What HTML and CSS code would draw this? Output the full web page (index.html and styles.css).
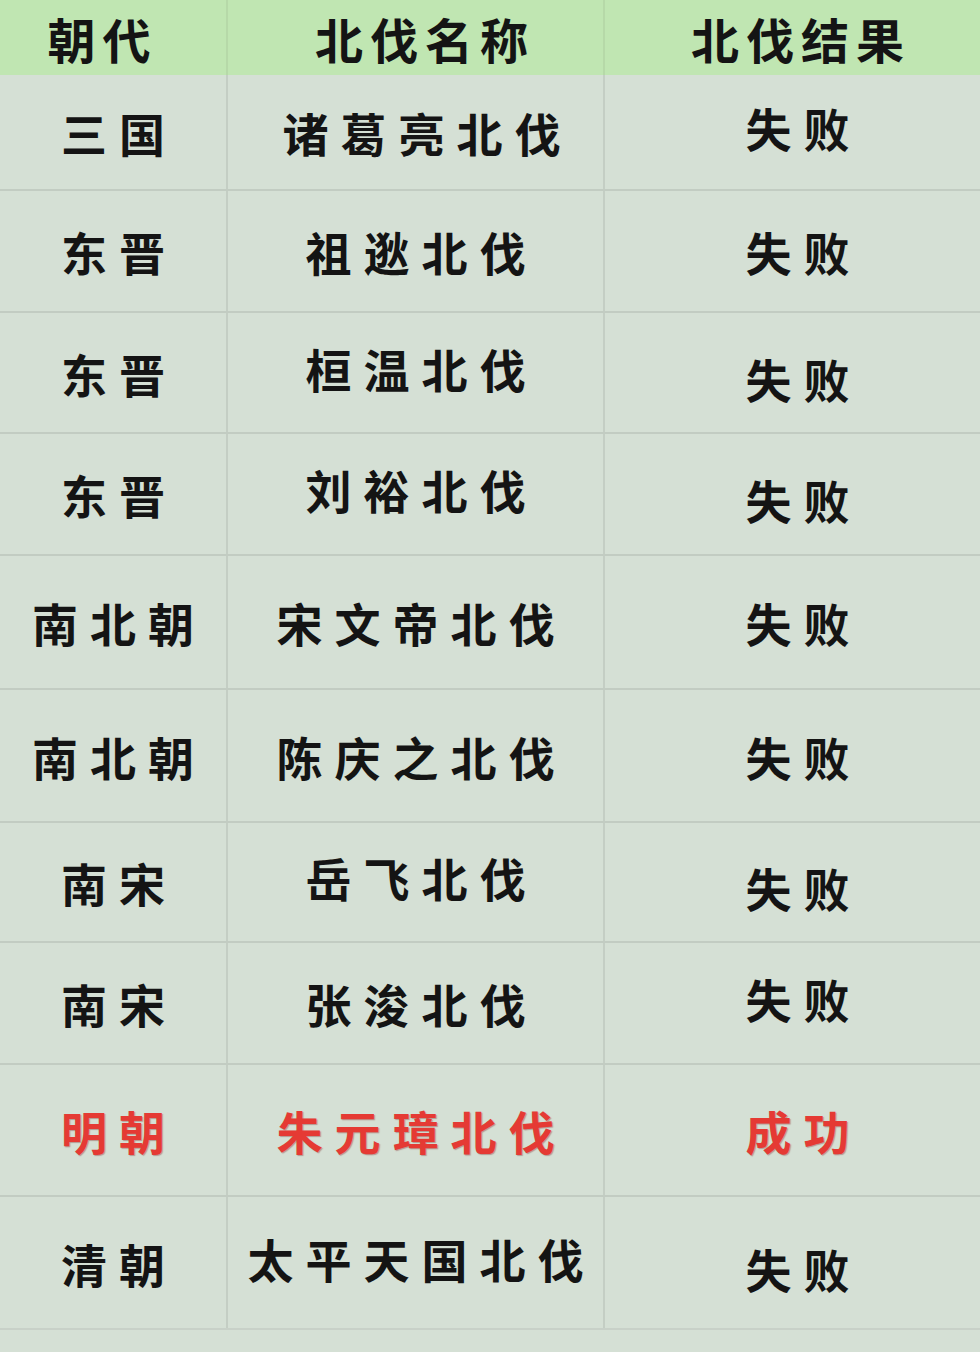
FILE: index.html
```html
<!DOCTYPE html>
<html lang="zh-CN">
<head>
<meta charset="utf-8">
<title>北伐</title>
<link rel="stylesheet" href="styles.css">
</head>
<body>
<div class="table">
  <div class="row head">
    <div class="cell c1"><span class="t">朝代</span></div>
    <div class="cell c2"><span class="t">北伐名称</span></div>
    <div class="cell c3"><span class="t">北伐结果</span></div>
  </div>
  <div class="row h116">
    <div class="cell c1"><span class="t">三国</span></div>
    <div class="cell c2"><span class="t right">诸葛亮北伐</span></div>
    <div class="cell c3"><span class="t up">失败</span></div>
  </div>
  <div class="row h122">
    <div class="cell c1"><span class="t">东晋</span></div>
    <div class="cell c2"><span class="t">祖逖北伐</span></div>
    <div class="cell c3"><span class="t">失败</span></div>
  </div>
  <div class="row h121">
    <div class="cell c1"><span class="t">东晋</span></div>
    <div class="cell c2"><span class="t up">桓温北伐</span></div>
    <div class="cell c3"><span class="t down">失败</span></div>
  </div>
  <div class="row h122">
    <div class="cell c1"><span class="t">东晋</span></div>
    <div class="cell c2"><span class="t up">刘裕北伐</span></div>
    <div class="cell c3"><span class="t down">失败</span></div>
  </div>
  <div class="row h134">
    <div class="cell c1"><span class="t">南北朝</span></div>
    <div class="cell c2"><span class="t">宋文帝北伐</span></div>
    <div class="cell c3"><span class="t">失败</span></div>
  </div>
  <div class="row h133">
    <div class="cell c1"><span class="t">南北朝</span></div>
    <div class="cell c2"><span class="t">陈庆之北伐</span></div>
    <div class="cell c3"><span class="t">失败</span></div>
  </div>
  <div class="row h120">
    <div class="cell c1"><span class="t">南宋</span></div>
    <div class="cell c2"><span class="t up">岳飞北伐</span></div>
    <div class="cell c3"><span class="t down">失败</span></div>
  </div>
  <div class="row h122">
    <div class="cell c1"><span class="t">南宋</span></div>
    <div class="cell c2"><span class="t">张浚北伐</span></div>
    <div class="cell c3"><span class="t up">失败</span></div>
  </div>
  <div class="row h132 ming">
    <div class="cell c1"><span class="t">明朝</span></div>
    <div class="cell c2"><span class="t">朱元璋北伐</span></div>
    <div class="cell c3"><span class="t">成功</span></div>
  </div>
  <div class="row h133 last">
    <div class="cell c1"><span class="t">清朝</span></div>
    <div class="cell c2"><span class="t up">太平天国北伐</span></div>
    <div class="cell c3"><span class="t down">失败</span></div>
  </div>
</div>
</body>
</html>
```
FILE: styles.css
```css
html, body {
  margin: 0;
  padding: 0;
  background: #d5e0d5;
}
body {
  width: 980px;
  height: 1352px;
  overflow: hidden;
  font-family: "Noto Sans CJK SC", "Noto Sans", sans-serif;
  color: #141414;
}
.table {
  display: flex;
  flex-direction: column;
  width: 980px;
}
.row {
  display: grid;
  grid-template-columns: 228px 377px 375px;
  border-bottom: 2px solid #c2ccc2;
  box-sizing: border-box;
}
.row.head {
  height: 75px;
  background: #c0e6b2;
  border-bottom: none;
}
.h116 { height: 116px; }
.h120 { height: 120px; }
.h121 { height: 121px; }
.h122 { height: 122px; }
.h132 { height: 132px; }
.h133 { height: 133px; }
.h134 { height: 134px; }
.row.last {
  border-bottom-color: #c8d1c8;
}
.cell {
  display: flex;
  align-items: center;
  justify-content: center;
  box-sizing: border-box;
}
.c1 {
  border-right: 2px solid #c4cec4;
}
.c2 {
  border-right: 2px solid #c4cec4;
}
.c3 {
  padding-left: 10px;
}
.head .c1, .head .c2 {
  border-right-color: #b6d9a8;
}
.head .c1 {
  padding-right: 28px;
}
.head .c2 {
  padding-left: 12px;
}
.t {
  font-size: 46px;
  font-weight: 700;
  line-height: 1;
  letter-spacing: 12px;
  margin-right: -12px;
}
.head .t {
  font-size: 48px;
  letter-spacing: 7px;
  margin-right: -7px;
}
.up { position: relative; top: -5px; }
.down { position: relative; top: 5px; }
.right { position: relative; left: 6px; }
.ming .t {
  color: #e53a34;
  text-shadow: 1px 1px 1px rgba(120, 20, 20, 0.35);
}
```
